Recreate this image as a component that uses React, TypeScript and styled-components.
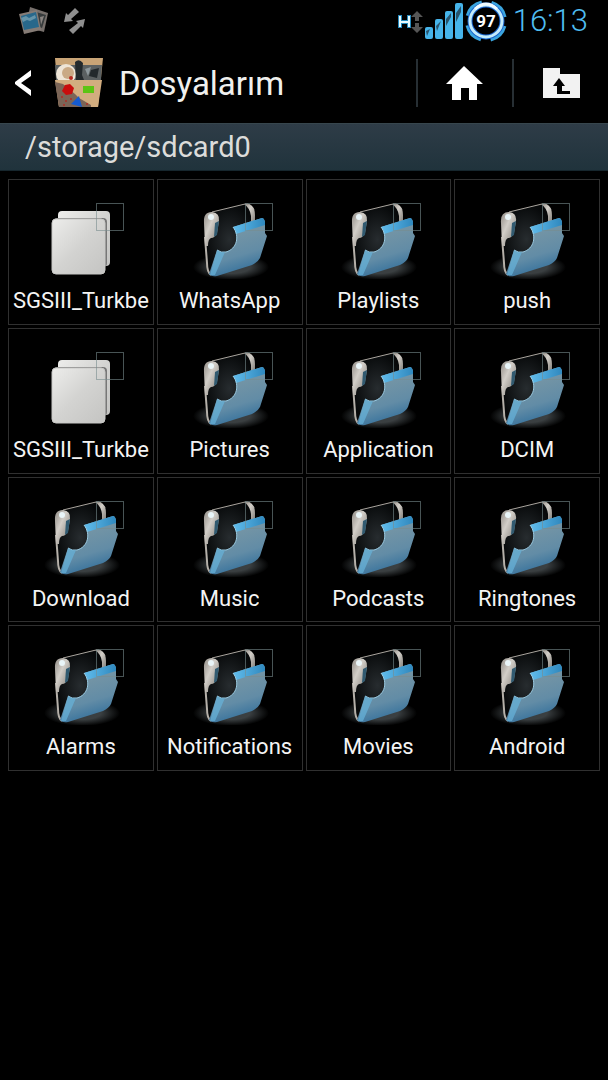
import React from "react";
import styled, { createGlobalStyle } from "styled-components";

const GlobalStyle = createGlobalStyle`
  * { box-sizing: border-box; }
  body { margin: 0; background: #000; color: #f4f4f4; font-family: Roboto, sans-serif; }
  button { font: inherit; color: inherit; background: none; border: 0; padding: 0; cursor: pointer; }
  svg { display: block; flex: none; }
`;

const Screen = styled.main`
  min-height: 100vh;
  background: #000;
`;

const StatusBar = styled.div`
  display: flex;
  align-items: center;
  justify-content: space-between;
  height: 42px;
  padding: 0 20px 0 18px;
`;

const StatusGroup = styled.div<{ $gap: number }>`
  display: flex;
  align-items: center;
  gap: ${(p) => p.$gap}px;
`;

const Clock = styled.time`
  padding-left: 4px;
  color: #4fbcf0;
  font-size: 31px;
  font-weight: 300;
  line-height: 42px;
`;

const ActionBar = styled.header`
  display: flex;
  align-items: center;
  height: 82px;
  border-bottom: 1px solid #37464d;
`;

const BackButton = styled.button`
  display: flex;
  align-items: center;
  gap: 20px;
  padding-left: 15px;
`;

const Title = styled.h1`
  flex: 1;
  margin: 0;
  padding: 2px 0 0 14px;
  font-size: 33px;
  font-weight: 400;
  line-height: 40px;
  color: #f0f0ee;
`;

const ActionButton = styled.button`
  display: flex;
  align-items: center;
  justify-content: center;
  width: 96px;
  height: 48px;
  border-left: 2px solid #272f34;
`;

const PathBar = styled.nav`
  height: 47px;
  padding: 0 25px;
  border-bottom: 1px solid #16262d;
  background: linear-gradient(#2e3c47, #20333c);
  color: #dcdcda;
  font-size: 29px;
  line-height: 46px;
`;

const FileGrid = styled.ul`
  display: grid;
  grid-template-columns: repeat(4, minmax(0, 1fr));
  gap: 3px;
  margin: 0;
  padding: 8px;
  list-style: none;
`;

const Tile = styled.li`
  position: relative;
  aspect-ratio: 1;
  border: 1px solid #303030;
`;

const OpenButton = styled.button`
  display: flex;
  flex-direction: column;
  align-items: center;
  width: 100%;
  height: 100%;
  padding: 19px 4px 0;
`;

const FileName = styled.span`
  max-width: 100%;
  overflow: hidden;
  white-space: nowrap;
  font-size: 22px;
  line-height: 44px;
`;

const SelectBox = styled.input`
  position: absolute;
  top: 23px;
  left: calc(50% + 15px);
  width: 28px;
  height: 28px;
  margin: 0;
  appearance: none;
  border: 1px solid rgba(120, 140, 142, 0.6);
`;

const FolderIcon = () => (
  <svg width="80" height="80" viewBox="0 0 80 80" aria-hidden="true">
    <ellipse cx="41" cy="68" rx="38" ry="13" fill="url(#shadow)" />
    <path d="M14 22Q14 15 22 13L55 5Q65 5 65 16V27L46 45L21 76Q17 74 16 65Z" fill="url(#inside)" />
    <path d="M22 13L55 5Q61 4 64 11" fill="none" stroke="#aaa59e" strokeWidth="1" />
    <path d="M54 5Q65 4 65 16V25L61 27V17Q60 9 54 5Z" fill="url(#silver)" />
    <path d="M15 38L17 64Q17 73 21 76" fill="none" stroke="#b5b0a9" strokeWidth="2" />
    <path d="M14 24Q13 13 22 13Q30 14 29 22L27 34Q25 39 21 39Q18 40 18 47H15Z" fill="url(#silver)" />
    <path d="M25 24L29 22L27 36L24 38Z" fill="#315a70" />
    <circle cx="21" cy="18" r="3" fill="#e9f5f8" />
    <path d="M43 28L72 19Q74 19 75 23V34L77 37L70 59Q68 63 62 66L27 77Q21 78 19 75L27 51Q31 54 36 53C47 50 50 37 43 28Z" fill="url(#front)" />
    <path d="M43 28L72 19Q74 19 75 23L75 26L46 35Q46 31 43 28Z" fill="url(#edge)" />
    <path d="M43 28C50 37 47 50 36 53Q31 54 27 51" fill="none" stroke="#9bcbe2" strokeWidth="1" />
    <path d="M27 51Q31 54 35 53L25 76L20 76Z" fill="#67b3dc" opacity=".7" />
  </svg>
);

const FileIcon = () => (
  <svg width="80" height="80" viewBox="0 0 80 80" aria-hidden="true">
    <rect x="17" y="12" width="52" height="55" rx="4" fill="url(#paper)" />
    <rect x="12" y="19" width="54" height="49" rx="4" fill="#777" />
    <rect x="11" y="20" width="53" height="55" rx="4" fill="url(#paper)" stroke="#c8c8c6" strokeWidth="1" />
  </svg>
);

const Paints = styled.svg`
  position: absolute;
`;

const IconPaints = () => (
  <Paints width="0" height="0" aria-hidden="true">
    <defs>
      <radialGradient id="shadow">
        <stop offset="0.5" stopColor="#3a3f41" />
        <stop offset="1" stopColor="#000" />
      </radialGradient>
      <radialGradient id="inside">
        <stop offset="0" stopColor="#272c2f" />
        <stop offset="1" stopColor="#07090a" />
      </radialGradient>
      <linearGradient id="silver" x1="0" y1="0" x2="1" y2="1">
        <stop offset="0" stopColor="#8f8a84" />
        <stop offset="0.4" stopColor="#d2cec8" />
        <stop offset="1" stopColor="#77736d" />
      </linearGradient>
      <linearGradient id="front" x1="0.3" y1="0" x2="0.6" y2="1">
        <stop offset="0" stopColor="#5fa6ce" />
        <stop offset="0.25" stopColor="#7595a5" />
        <stop offset="0.65" stopColor="#628ca6" />
        <stop offset="1" stopColor="#2d6c9a" />
      </linearGradient>
      <linearGradient id="edge" x1="0" y1="0" x2="1" y2="0">
        <stop offset="0" stopColor="#62bdec" />
        <stop offset="1" stopColor="#2f88be" />
      </linearGradient>
      <linearGradient id="paper" x1="0" y1="0" x2="1" y2="1">
        <stop offset="0" stopColor="#ededeb" />
        <stop offset="0.5" stopColor="#d3d3d1" />
        <stop offset="1" stopColor="#c4c4c2" />
      </linearGradient>
    </defs>
  </Paints>
);

const PhotosIcon = () => (
  <svg width="32" height="28" viewBox="0 0 32 28" aria-hidden="true">
    <path d="M12 0L30 6L26 25L8 20Z" fill="#77706c" />
    <path d="M15 4L28 8L24 21L13 17Z" fill="#373b3c" />
    <path d="M22 10L26 9L23 18Z" fill="#8b8582" />
    <path d="M1 7L19 3L23 23L6 27Z" fill="#857b75" />
    <path d="M3 9L18 5L21 20L6 23Z" fill="#28688b" />
    <path d="M3 11L8 9L11 11L17 8L18 11L12 14L9 13L5 15Z" fill="#6594a9" />
  </svg>
);

const SyncIcon = () => (
  <svg width="22" height="28" viewBox="0 0 22 28" aria-hidden="true" fill="#8f8f8f">
    <path d="M0 15L2 6L4 8L11 1L15 5L7 12L9 14Z" />
    <path d="M21 12L12 14L14 16L5 23L9 27L17 19L19 21Z" />
  </svg>
);

const NetworkIcon = () => (
  <svg width="25" height="40" viewBox="0 0 25 40" aria-hidden="true">
    <path d="M2 14V27M11 14V27M2 21H11" fill="none" stroke="#2589bd" strokeWidth="4" />
    <path d="M2 15V26M11 15V26M2 21H11" fill="none" stroke="#e8fbff" strokeWidth="2" />
    <path d="M19 10L25 16H21V20H17V16H13ZM19 32L25 26H21V22H17V26H13Z" fill="#555" />
  </svg>
);

const SignalIcon = () => (
  <svg width="38" height="40" viewBox="0 0 38 40" aria-hidden="true">
    <g fill="#46b4ea">
      <rect x="0" y="26" width="8" height="12" rx="2" />
      <rect x="10" y="18" width="8" height="20" rx="2" />
      <rect x="20" y="10" width="8" height="28" rx="2" />
      <rect x="30" y="2" width="8" height="36" rx="2" />
    </g>
    <path d="M1 30L5 28L2 35ZM11 25L16 20L12 30ZM21 18L26 12V16L21 25ZM31 12L36 5V11L31 21Z" fill="#28546e" />
  </svg>
);

const BatteryIcon = () => (
  <svg width="42" height="42" viewBox="0 0 42 42" role="img" aria-label="97%">
    <circle cx="21" cy="21" r="19" fill="none" stroke="#3ba5df" strokeWidth="4" strokeDasharray="20 9.85" strokeDashoffset="-5" />
    <circle cx="21" cy="21" r="16" fill="#000" stroke="#1763cd" strokeWidth="5" />
    <circle cx="21" cy="21" r="16" fill="none" stroke="#c4ecfb" strokeWidth="3" />
    <path d="M10 9Q21 -1 32 9" fill="none" stroke="#f2fcff" strokeWidth="3" />
    <text x="21" y="27" textAnchor="middle" fill="#fff" fontFamily="Roboto" fontSize="17" fontWeight="700">97</text>
  </svg>
);

const BackIcon = () => (
  <svg width="16" height="26" viewBox="0 0 16 26" aria-hidden="true">
    <path d="M16 0V6L6 13L16 20V26L0 14V12Z" fill="#fff" />
  </svg>
);

const AppIcon = () => (
  <svg width="54" height="50" viewBox="0 0 54 50" aria-hidden="true">
    <path d="M4 0H52L47 49H8Z" fill="#c9a476" />
    <path d="M4 7H51L50 22H5Z" fill="#5b6061" />
    <circle cx="15" cy="16" r="10" fill="#eee4d6" />
    <circle cx="17" cy="15" r="6" fill="#c9a985" />
    <path d="M24 4Q28 0 32 5L31 17L33 22H25ZM40 12L48 10L46 20L38 18Z" fill="#23292c" />
    <path d="M34 11L40 9L37 18Z" fill="#8d979b" />
    <circle cx="20" cy="20" r="2" fill="#b52a20" />
    <path d="M4 22H51L47 49H8Z" fill="#d2ad7f" />
    <path d="M4 24L12 26L24 36L28 40L40 47V49H8Z" fill="#7b6557" />
    <path d="M10 38H12V40H10ZM14 42H16V44H14ZM19 40H21V42H19ZM12 46H14V48H12ZM35 45H37V47H35Z" fill="#a33a30" />
    <path d="M14 27L19 26L23 30L21 36L15 37L11 33Z" fill="#c80d0d" />
    <rect x="32" y="28" width="11" height="7" fill="#5cc414" />
    <path d="M20 46L28 38L31 49Z" fill="#155bd0" />
  </svg>
);

const HomeIcon = () => (
  <svg width="38" height="34" viewBox="0 0 38 34" aria-hidden="true">
    <path d="M18 0L37 18H31V34H23V22H15V34H6V18H0Z" fill="#fff" />
  </svg>
);

const UpFolderIcon = () => (
  <svg width="37" height="30" viewBox="0 0 37 30" aria-hidden="true">
    <path d="M0 0H17V6H37V30H0Z" fill="#f2f2f2" />
    <path d="M16 10L22 18H19V23H27V26H14V18H10Z" fill="#000" />
  </svg>
);

type Entry = { name: string; kind: "file" | "folder" };

const folder = (name: string): Entry => ({ name, kind: "folder" });
const file = (name: string): Entry => ({ name, kind: "file" });

const entries: Entry[] = [
  file("SGSIII_Turkbe"), folder("WhatsApp"), folder("Playlists"), folder("push"),
  file("SGSIII_Turkbe"), folder("Pictures"), folder("Application"), folder("DCIM"),
  folder("Download"), folder("Music"), folder("Podcasts"), folder("Ringtones"),
  folder("Alarms"), folder("Notifications"), folder("Movies"), folder("Android"),
];

export default function App() {
  return (
    <Screen>
      <GlobalStyle />
      <IconPaints />
      <StatusBar>
        <StatusGroup $gap={14}>
          <PhotosIcon />
          <SyncIcon />
        </StatusGroup>
        <StatusGroup $gap={2}>
          <NetworkIcon />
          <SignalIcon />
          <BatteryIcon />
          <Clock>16:13</Clock>
        </StatusGroup>
      </StatusBar>
      <ActionBar>
        <BackButton aria-label="Geri">
          <BackIcon />
          <AppIcon />
        </BackButton>
        <Title>Dosyalarım</Title>
        <ActionButton aria-label="Ana klasör"><HomeIcon /></ActionButton>
        <ActionButton aria-label="Üst klasör"><UpFolderIcon /></ActionButton>
      </ActionBar>
      <PathBar>/storage/sdcard0</PathBar>
      <FileGrid>
        {entries.map((entry, i) => (
          <Tile key={i}>
            <OpenButton>
              {entry.kind === "file" ? <FileIcon /> : <FolderIcon />}
              <FileName>{entry.name}</FileName>
            </OpenButton>
            <SelectBox type="checkbox" aria-label={entry.name} />
          </Tile>
        ))}
      </FileGrid>
    </Screen>
  );
}
